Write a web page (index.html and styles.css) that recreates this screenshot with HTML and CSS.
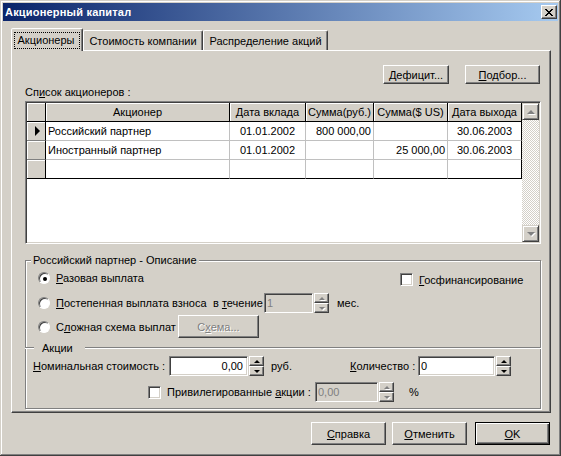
FILE: index.html
```html
<!DOCTYPE html>
<html lang="ru">
<head>
    <meta charset="UTF-8">
    <title>Акционерный капитал</title>
    <link rel="stylesheet" href="styles.css">
</head>
<body>
<div class="window">
    <div class="titlebar">
        <span class="title">Акционерный капитал</span>
        <button class="close">
            <svg width="8" height="7" viewBox="0 0 8 7" shape-rendering="crispEdges"><path d="M0 0h2v1H0zM6 0h2v1H6zM1 1h2v1H1zM5 1h2v1H5zM2 2h4v1H2zM3 3h2v1H3zM2 4h4v1H2zM1 5h2v1H1zM5 5h2v1H5zM0 6h2v1H0zM6 6h2v1H6z" fill="#000"/></svg>
        </button>
    </div>

    <div class="tabs">
        <div class="tab active" style="width:72px"><span class="focus">Акционеры</span></div>
        <div class="tab" style="width:120px">Стоимость компании</div>
        <div class="tab" style="width:125px">Распределение акций</div>
    </div>

    <div class="panel">
        <div class="toolbar">
            <button class="btn" style="width:66px"><u>Д</u>ефицит...</button>
            <button class="btn" style="width:75px"><u>П</u>одбор...</button>
        </div>
        <div class="list-label">Сп<u>и</u>сок акционеров :</div>

        <div class="grid">
            <div class="grid-cells">
                <div class="cell fixed ind"></div>
                <div class="cell fixed">Акционер</div>
                <div class="cell fixed">Дата вклада</div>
                <div class="cell fixed">Сумма(руб.)</div>
                <div class="cell fixed">Сумма($ US)</div>
                <div class="cell fixed last">Дата выхода</div>

                <div class="cell ind"><span class="pointer"></span></div>
                <div class="cell">Российский партнер</div>
                <div class="cell center">01.01.2002</div>
                <div class="cell right">800 000,00</div>
                <div class="cell right"></div>
                <div class="cell center last">30.06.2003</div>

                <div class="cell ind"></div>
                <div class="cell">Иностранный партнер</div>
                <div class="cell center">01.01.2002</div>
                <div class="cell right"></div>
                <div class="cell right">25 000,00</div>
                <div class="cell center last">30.06.2003</div>

                <div class="cell ind end"></div>
                <div class="cell end"></div>
                <div class="cell end"></div>
                <div class="cell end"></div>
                <div class="cell end"></div>
                <div class="cell end last"></div>
            </div>
            <div class="vscroll">
                <div class="sb-btn"><span class="arrow up off"></span></div>
                <div class="sb-track"></div>
                <div class="sb-btn"><span class="arrow down off"></span></div>
            </div>
        </div>

        <div class="group">
            <div class="group-title">Российский партнер - Описание</div>

            <div class="g-row row1">
                <label class="opt"><span class="radio checked"></span><span><u>Р</u>азовая выплата</span></label>
                <label class="opt gosfin"><span class="check"></span><span><u>Г</u>осфинансирование</span></label>
            </div>

            <div class="g-row row2">
                <label class="opt" style="width:175px"><span class="radio"></span><span><u>П</u>остепенная выплата взноса</span></label>
                <span style="width:51px">в <u>т</u>ечение</span>
                <input class="edit" style="width:49px" value="1" disabled>
                <span class="spin off"><span class="spin-btn"><span class="arrow up small"></span></span><span class="spin-btn"><span class="arrow down small"></span></span></span>
                <span class="unit" style="margin-left:8px">мес.</span>
            </div>

            <div class="g-row row3">
                <label class="opt" style="width:140px"><span class="radio"></span><span>С<u>л</u>ожная схема выплат</span></label>
                <button class="btn disabled" style="width:81px;height:23px">С<u>х</u>ема...</button>
            </div>

            <div class="divider"><span>Акции</span></div>

            <div class="g-row row4">
                <span style="width:136px"><u>Н</u>оминальная стоимость :</span>
                <input class="edit num" style="width:79px" value="0,00">
                <span class="spin"><span class="spin-btn"><span class="arrow up small"></span></span><span class="spin-btn"><span class="arrow down small"></span></span></span>
                <span style="margin-left:7px;width:79px">руб.</span>
                <span style="width:68px"><u>К</u>оличество :</span>
                <input class="edit" style="width:77px" value="0">
                <span class="spin"><span class="spin-btn"><span class="arrow up small"></span></span><span class="spin-btn"><span class="arrow down small"></span></span></span>
            </div>

            <div class="g-row row5">
                <label class="opt" style="width:167px"><span class="check"></span><span>Привилегированные <u>а</u>кции :</span></label>
                <input class="edit" style="width:63px" value="0,00" disabled>
                <span class="spin off"><span class="spin-btn"><span class="arrow up small"></span></span><span class="spin-btn"><span class="arrow down small"></span></span></span>
                <span style="margin-left:15px">%</span>
            </div>
        </div>
    </div>

    <div class="footer">
        <button class="btn big"><u>С</u>правка</button>
        <button class="btn big"><u>О</u>тменить</button>
        <button class="btn big default"><u>O</u>K</button>
    </div>
</div>
</body>
</html>
```

FILE: styles.css
```css
body {
    margin: 0;
    background: #d4d0c8;
    font-family: "Liberation Sans", Arial, sans-serif;
    font-size: 11px;
    color: #000;
}

.window {
    width: 561px;
    height: 456px;
    box-sizing: border-box;
    padding: 3px;
    background: #d4d0c8;
    box-shadow: inset -1px -1px #404040, inset 1px 1px #d4d0c8, inset -2px -2px #808080, inset 2px 2px #fff;
}

/* title bar */
.titlebar {
    height: 18px;
    display: flex;
    align-items: center;
    justify-content: space-between;
    padding: 0 1px 0 2px;
    background: linear-gradient(to right, #0a246a, #a6caf0);
}
.title {
    color: #fff;
    font-weight: bold;
    font-size: 11px;
    letter-spacing: 0.2px;
}
.close {
    width: 16px;
    height: 14px;
    padding: 0;
    display: flex;
    align-items: center;
    justify-content: center;
    background: #d4d0c8;
    border: 1px solid;
    border-color: #fff #404040 #404040 #fff;
    box-shadow: inset -1px -1px #808080;
}

/* tabs */
.tabs {
    display: flex;
    align-items: flex-end;
    height: 22px;
    margin-top: 7px;
    padding-left: 8px;
}
.tab {
    height: 20px;
    box-sizing: border-box;
    display: flex;
    align-items: center;
    justify-content: center;
    border: 1px solid;
    border-bottom: none;
    border-color: #fff #404040 transparent #fff;
    border-radius: 2px 2px 0 0;
    box-shadow: inset -1px 0 #808080;
    white-space: nowrap;
}
.tab.active {
    height: 23px;
    margin-bottom: -1px;
    position: relative;
    z-index: 1;
    background: #d4d0c8;
}
.focus {
    outline: 1px dotted #000;
    padding: 1px 5px 1px 3px;
    line-height: 13px;
}

.panel {
    width: 540px;
    height: 363px;
    margin-left: 8px;
    box-sizing: border-box;
    border: 1px solid;
    border-color: #fff #404040 #404040 #fff;
    box-shadow: inset -1px -1px #808080;
    padding: 0 10px 0 13px;
}

/* buttons */
button {
    font: inherit;
    color: #000;
}
.btn {
    height: 19px;
    padding: 0;
    box-sizing: border-box;
    background: #d4d0c8;
    border: 1px solid;
    border-color: #fff #404040 #404040 #fff;
    box-shadow: inset -1px -1px #808080;
}
.btn.big {
    width: 75px;
    height: 23px;
}
.btn.default {
    border: 1px solid #000;
    box-shadow: inset 1px 1px #fff, inset -1px -1px #404040, inset -2px -2px #808080;
}
.btn.disabled {
    color: #808080;
    text-shadow: 1px 1px #fff;
}

.toolbar {
    display: flex;
    justify-content: flex-end;
    gap: 16px;
    margin-top: 14px;
}
.list-label {
    height: 13px;
    line-height: 13px;
    margin: 2px 0 2px;
}

/* grid */
.grid {
    width: 516px;
    height: 143px;
    box-sizing: border-box;
    display: flex;
    background: #fff;
    border: 1px solid;
    border-color: #808080 #fff #fff #808080;
    box-shadow: inset 1px 1px #404040, inset -1px -1px #d4d0c8;
    padding: 1px;
}
.grid-cells {
    width: 495px;
    display: grid;
    grid-template-columns: 19px 184px 76px 68px 74px 74px;
    grid-auto-rows: 19px;
    align-content: start;
}
.cell {
    box-sizing: border-box;
    border-right: 1px solid #c0c0c0;
    border-bottom: 1px solid #c0c0c0;
    padding: 0 2px;
    line-height: 18px;
    white-space: nowrap;
    overflow: hidden;
}
.cell.fixed {
    background: #d4d0c8;
    border-color: #000;
    box-shadow: inset 1px 1px #fff;
    text-align: center;
}
.cell.ind {
    background: #d4d0c8;
    border-right-color: #000;
    border-bottom-color: #808080;
    box-shadow: inset 1px 1px #fff;
    display: flex;
    align-items: center;
    justify-content: center;
    padding: 0;
}
.cell.fixed.ind {
    border-bottom-color: #000;
}
.cell.last {
    border-right-color: #000;
}
.cell.end {
    border-bottom-color: #000;
}
.center { text-align: center; }
.right { text-align: right; }
.pointer {
    width: 0;
    height: 0;
    border-left: 5px solid #000;
    border-top: 5px solid transparent;
    border-bottom: 5px solid transparent;
    margin-left: 2px;
}

.vscroll {
    width: 17px;
    display: flex;
    flex-direction: column;
}
.sb-btn {
    height: 17px;
    box-sizing: border-box;
    background: #d4d0c8;
    border: 1px solid;
    border-color: #d4d0c8 #404040 #404040 #d4d0c8;
    box-shadow: inset 1px 1px #fff, inset -1px -1px #808080;
    display: flex;
    align-items: center;
    justify-content: center;
}
.sb-track {
    flex: 1;
    background: repeating-conic-gradient(#fff 0 25%, #d4d0c8 0 50%) 0 0 / 2px 2px;
}

.arrow {
    width: 0;
    height: 0;
    border-left: 4px solid transparent;
    border-right: 4px solid transparent;
}
.arrow.up { border-bottom: 4px solid #000; }
.arrow.down { border-top: 4px solid #000; }
.arrow.off.up { border-bottom-color: #808080; filter: drop-shadow(1px 1px 0 #fff); }
.arrow.off.down { border-top-color: #808080; filter: drop-shadow(1px 1px 0 #fff); }
.arrow.small {
    border-left-width: 3px;
    border-right-width: 3px;
}
.arrow.small.up { border-bottom-width: 3px; }
.arrow.small.down { border-top-width: 3px; }

/* group box */
.group {
    width: 516px;
    height: 149px;
    box-sizing: border-box;
    margin-top: 16px;
    border: 1px solid #808080;
    box-shadow: inset 1px 1px #fff, 1px 1px #fff;
    padding: 0 8px 0 12px;
}
.group-title {
    width: fit-content;
    height: 13px;
    line-height: 13px;
    margin: -7px 0 0 -7px;
    padding: 0 2px;
    background: #d4d0c8;
}
.g-row {
    display: flex;
    align-items: center;
    white-space: nowrap;
}
.g-row > span {
    flex: none;
}
.row1 { height: 16px; margin-top: 3px; }
.row2 { height: 20px; margin-top: 7px; }
.row3 { height: 23px; margin-top: 2px; }
.row4 { height: 20px; margin-top: 2px; margin-left: -5px; }
.row5 { height: 20px; margin-top: 6px; margin-left: 110px; }

.opt {
    display: flex;
    align-items: center;
    gap: 6px;
    flex: none;
}
.gosfin {
    margin-left: auto;
    width: 132px;
    align-self: flex-end;
}
.radio {
    flex: none;
    width: 12px;
    height: 12px;
    box-sizing: border-box;
    border-radius: 50%;
    border: 1px solid;
    border-color: #808080 #fff #fff #808080;
    background: #fff;
    box-shadow: inset 1px 1px #404040;
    display: flex;
    align-items: center;
    justify-content: center;
}
.radio.checked::after {
    content: "";
    width: 4px;
    height: 4px;
    border-radius: 50%;
    background: #000;
    margin: 1px 0 0 1px;
}
.check {
    flex: none;
    width: 13px;
    height: 13px;
    box-sizing: border-box;
    background: #fff;
    border: 1px solid;
    border-color: #808080 #fff #fff #808080;
    box-shadow: inset 1px 1px #404040, inset -1px -1px #d4d0c8;
}

.edit {
    height: 20px;
    box-sizing: border-box;
    font: inherit;
    color: #000;
    padding: 0 2px;
    margin: 0;
    background: #fff;
    border: 1px solid;
    border-color: #808080 #fff #fff #808080;
    box-shadow: inset 1px 1px #404040, inset -1px -1px #d4d0c8;
    outline: none;
    flex: none;
}
.edit.num { text-align: right; padding-right: 4px; }
.edit:disabled {
    background: #d4d0c8;
    color: #808080;
    -webkit-text-fill-color: #808080;
    opacity: 1;
}

.spin {
    width: 15px;
    height: 20px;
    margin-left: 1px;
    display: flex;
    flex-direction: column;
    flex: none;
}
.spin-btn {
    height: 10px;
    box-sizing: border-box;
    background: #d4d0c8;
    border: 1px solid;
    border-color: #fff #404040 #404040 #fff;
    box-shadow: inset -1px -1px #808080;
    display: flex;
    align-items: center;
    justify-content: center;
}
.spin.off .arrow.up { border-bottom-color: #808080; filter: drop-shadow(1px 1px 0 #fff); }
.spin.off .arrow.down { border-top-color: #808080; filter: drop-shadow(1px 1px 0 #fff); }

.divider {
    display: flex;
    align-items: center;
    height: 13px;
    margin: 3px -9px 0 -13px;
}
.divider::before,
.divider::after {
    content: "";
    height: 0;
    border-top: 1px solid #808080;
    border-bottom: 1px solid #fff;
}
.divider::before { width: 9px; }
.divider::after { flex: 1; }
.divider span { padding: 0 12px 0 8px; }

.footer {
    display: flex;
    justify-content: flex-end;
    gap: 6px;
    margin-top: 9px;
    padding-right: 8px;
}
.footer .default { margin-left: 2px; }
```
